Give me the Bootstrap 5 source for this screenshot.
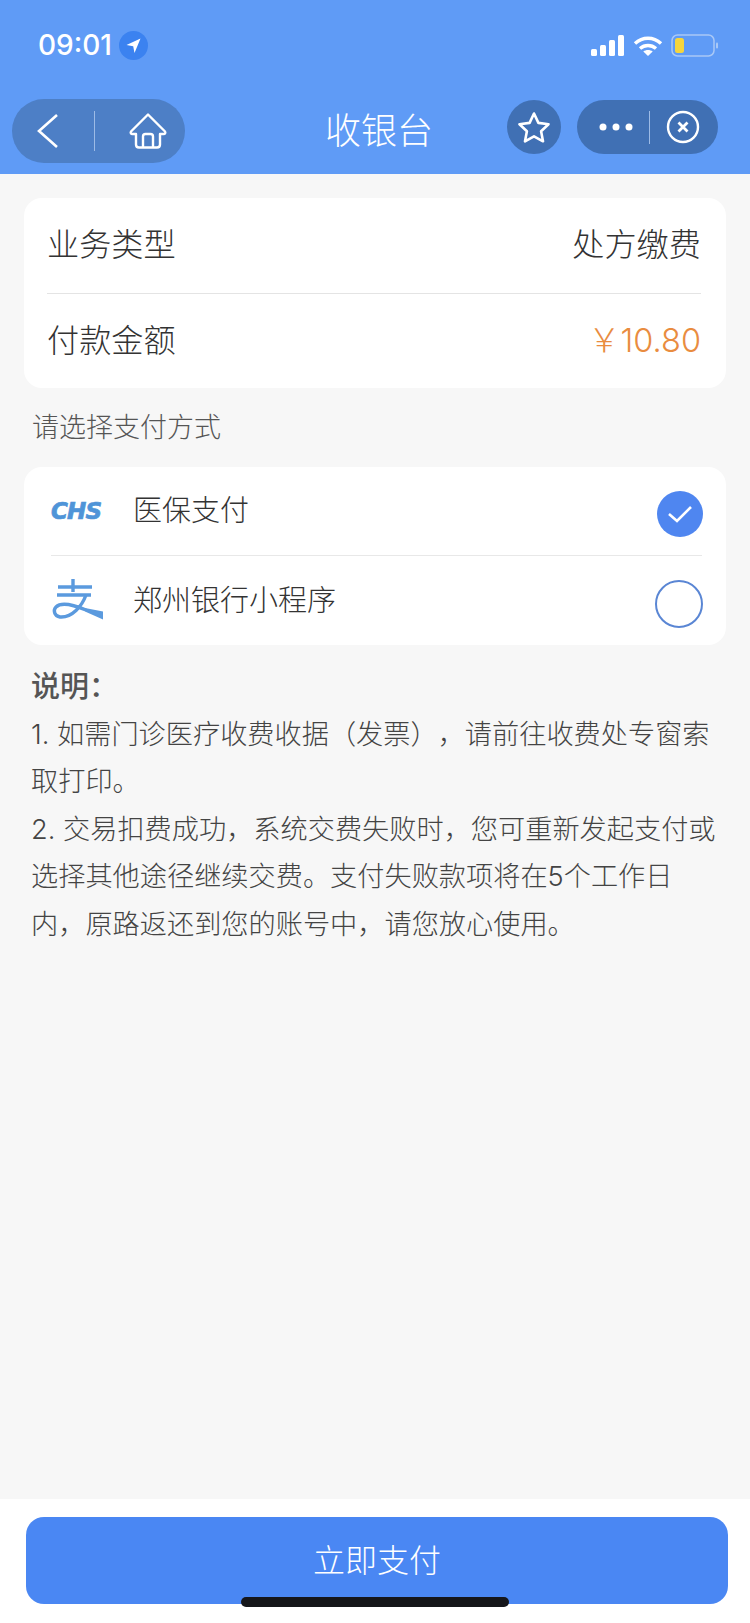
<!DOCTYPE html>
<html lang="zh-CN">
<head>
<meta charset="utf-8">
<title>收银台</title>
<link href="https://cdn.jsdelivr.net/npm/bootstrap@5.3.0/dist/css/bootstrap.min.css" rel="stylesheet">
<style>
html,body{margin:0;height:1623px;overflow:hidden}
body{font-family:Inter,"Noto Sans CJK SC",sans-serif;background:#f7f7f7;color:#333;width:750px;text-spacing-trim:space-all}
.page-wrap{height:1623px}
.app-head{height:174px;background:#5f9bf6;color:#fff;flex:none}
.status-row{height:95px;padding:29px 31px 0 38px}
.clock{font-family:Inter,"Liberation Sans",sans-serif;font-size:28px;font-weight:500;line-height:32px}
.loc-dot{width:29px;height:29px;border-radius:50%;background:#3b82f0;margin-left:7px}
.status-icons{margin-top:5px}
.title-row{height:79px;padding:4px 32px 14px 12px}
.cap-left{width:173px;height:64px;border-radius:32px;background:#4d7fc6}
.cap-star{width:54px;height:54px;border-radius:50%;background:#4070b4;margin-top:1px}
.cap-right{width:141px;height:54px;border-radius:27px;background:#4070b4;margin-left:16px;margin-top:1px}
.cap-sep{width:1px;background:#9dbbe6;height:40px}
.chev{margin-left:24px}
.sep-a{margin-left:34px}
.home-ico{margin-left:34px}
.dots-ico{margin-left:21px}
.sep-b{height:33px;margin-left:15px}
.close-ico{margin-left:16px}
.page-title{font-size:36px;font-weight:300;line-height:64px;left:4px;right:-4px;text-align:center;top:4px}
.title-wrap{height:64px}
.panel{background:#fff;border-radius:18px;margin-left:24px;margin-right:24px}
.top-panel{margin-top:24px;height:190px;padding:0 25px 0 23px}
.top-line{height:95px;font-size:32.2px;font-weight:300;color:#333}
.top-line+.top-line{border-top:1px solid #e4e4e4}
.amount{color:#e98c3f;font-size:32.5px;font-weight:300}
.pick-label{font-size:27px;font-weight:300;color:#555;line-height:30px;padding:0 32px;margin-top:25px;margin-bottom:24px}
.pay-panel{height:178px;padding:0 24px 0 27px}
.pay-line{height:88px;font-size:29px;font-weight:300;color:#333}
.pay-line+.pay-line{border-top:1px solid #e8e8e8;height:90px}
.logo-box{width:58px;margin-right:24px}
.chs-mark{font-family:"DejaVu Sans",sans-serif;font-weight:700;font-style:italic;font-size:23px;color:#4f94d8;letter-spacing:-.8px;line-height:1;-webkit-text-stroke:.7px #4f94d8}
.ali-mark{margin-left:-1px}
.tick-on{width:46px;height:46px;border-radius:50%;background:#4f86f0;margin-right:-1px;margin-top:6px}
.tick-off{width:48px;height:48px;border-radius:50%;border:2px solid #5a86d4;background:#fff;margin-right:-1px;margin-top:6px}
.note-text{padding:0 30px 0 31px;margin-top:18px;font-size:27.2px;font-weight:300;line-height:47.5px;color:#444}
.note-head{font-weight:500;font-size:29px;color:#555}
.foot-bar{height:124px;background:#fff;padding:18px 22px 0 26px;flex:none}
.pay-btn{height:87px;border-radius:18px;background:#4a87f3;border:0;color:#fff;font-size:32px;font-weight:300;width:100%}
.pay-btn:hover,.pay-btn:active{background:#4a87f3!important;color:#fff!important}
.home-bar{left:241px;width:268px;height:10px;bottom:16px;border-radius:5px;background:#15161a}
</style>
</head>
<body class="position-relative">
<div class="page-wrap d-flex flex-column">
  <header class="app-head">
    <div class="status-row d-flex justify-content-between align-items-start">
      <div class="d-flex align-items-center">
        <span class="clock">09:01</span>
        <span class="loc-dot d-inline-flex align-items-center justify-content-center">
          <svg width="19" height="19" viewBox="0 0 19 19"><path d="M16.500 2.500 2.500 9l6.700 1.200 1.300 6.800z" fill="#fff"/></svg>
        </span>
      </div>
      <div class="status-icons d-flex align-items-center gap-2">
        <svg width="34" height="22" viewBox="0 0 34 22"><g fill="#fff"><rect x="0" y="14" width="6" height="7" rx="1.500"/><rect x="9" y="10" width="6" height="11" rx="1.500"/><rect x="18" y="5" width="6" height="16" rx="1.500"/><rect x="27" y="0" width="6" height="21" rx="1.500"/></g></svg>
        <svg width="30" height="22" viewBox="0 0 30 22"><g fill="none" stroke="#fff" stroke-width="3.400"><path d="M2 8.500C9.500 1.500 20.500 1.500 28 8.500"/><path d="M7 13.500c4.600-4 11.400-4 16 0"/></g><path d="M15 21l-4.700-4.600c2.700-2 6.700-2 9.400 0z" fill="#fff"/></svg>
        <svg width="48" height="24" viewBox="0 0 48 24"><rect x="1" y="1" width="42" height="21" rx="5.500" fill="none" stroke="#a9c8f6" stroke-width="1.500"/><rect x="4" y="4" width="9" height="15" rx="2.500" fill="#f6d53c"/><rect x="45" y="8.500" width="2" height="6" rx="1" fill="#a9c8f6"/></svg>
      </div>
    </div>
    <div class="title-row d-flex position-relative">
      <div class="cap-left d-flex align-items-center">
        <svg class="chev" width="24" height="36" viewBox="0 0 24 36"><path d="M21 2 3 18l18 16" fill="none" stroke="#fff" stroke-width="2.600"/></svg>
        <span class="cap-sep sep-a"></span>
        <svg class="home-ico" width="38" height="38" viewBox="0 0 38 38" fill="none" stroke="#fff" stroke-width="2.400" stroke-linejoin="round"><path d="M19 2.500 36 19.500c.8 1.400 0 2.500-1.500 2.500H31v10.500c0 2-1.500 3-3 3H10c-1.500 0-3-1-3-3V22H3.500C2 22 1.200 20.900 2 19.500z"/><path d="M14 35V24.500c0-1.600 1-2.500 2.500-2.500h5c1.500 0 2.500.9 2.500 2.500V35"/></svg>
      </div>
      <div class="title-wrap flex-grow-1"></div>
      <div class="page-title position-absolute">收银台</div>
      <div class="cap-star d-flex align-items-center justify-content-center">
        <svg width="34" height="32" viewBox="0 0 34 32"><path d="M17 2.500l4.400 9.400 10.100 1.300-7.400 7 1.900 10.100L17 25.300 8 30.300l1.900-10.100-7.400-7 10.100-1.300z" fill="none" stroke="#fff" stroke-width="2.600" stroke-linejoin="round"/></svg>
      </div>
      <div class="cap-right d-flex align-items-center">
        <svg class="dots-ico" width="36" height="10" viewBox="0 0 36 10" fill="#fff"><circle cx="5" cy="5" r="3.500"/><circle cx="18" cy="5" r="3.500"/><circle cx="31" cy="5" r="3.500"/></svg>
        <span class="cap-sep sep-b"></span>
        <svg class="close-ico" width="34" height="34" viewBox="0 0 34 34" fill="none" stroke="#fff"><circle cx="17" cy="17" r="15" stroke-width="2.400"/><path d="M12.500 12.500l9 9m0-9-9 9" stroke-width="2.800"/></svg>
      </div>
    </div>
  </header>

  <main class="flex-grow-1">
    <section class="panel top-panel">
      <div class="top-line d-flex justify-content-between align-items-center"><span>业务类型</span><span>处方缴费</span></div>
      <div class="top-line d-flex justify-content-between align-items-center"><span>付款金额</span><span class="amount">￥10.80</span></div>
    </section>
    <div class="pick-label">请选择支付方式</div>
    <section class="panel pay-panel">
      <div class="pay-line d-flex align-items-center">
        <span class="logo-box d-flex align-items-center"><span class="chs-mark">CHS</span></span>
        <span class="flex-grow-1">医保支付</span>
        <span class="tick-on d-inline-flex align-items-center justify-content-center">
          <svg width="26" height="20" viewBox="0 0 26 20"><path d="M2 10l8 7L24 3" fill="none" stroke="#fff" stroke-width="2.600"/></svg>
        </span>
      </div>
      <div class="pay-line d-flex align-items-center">
        <span class="logo-box d-flex align-items-center">
          <svg class="ali-mark" width="56" height="50" viewBox="0 0 56 50"><g fill="none" stroke="#5b9ade" stroke-width="3.400"><path d="M8 11h34M23 3v13M7 19h34"/><path d="M36 19C32 30 22 42 10 41 4 40 3 34 6 31c5-5 18-2 30 3"/></g><path d="M35 32 53 35.500v8L35 35.500z" fill="#5b9ade"/></svg>
        </span>
        <span class="flex-grow-1">郑州银行小程序</span>
        <span class="tick-off"></span>
      </div>
    </section>
    <section class="note-text">
      <div class="note-head">说明：</div>
      <div>1. 如需门诊医疗收费收据（发票），请前往收费处专窗索取打印。</div>
      <div>2. 交易扣费成功，系统交费失败时，您可重新发起支付或选择其他途径继续交费。支付失败款项将在5个工作日内，原路返还到您的账号中，请您放心使用。</div>
    </section>
  </main>

  <footer class="foot-bar">
    <button type="button" class="btn pay-btn">立即支付</button>
  </footer>
</div>
<div class="home-bar position-absolute"></div>
<script src="https://cdn.jsdelivr.net/npm/bootstrap@5.3.0/dist/js/bootstrap.bundle.min.js"></script>
</body>
</html>
